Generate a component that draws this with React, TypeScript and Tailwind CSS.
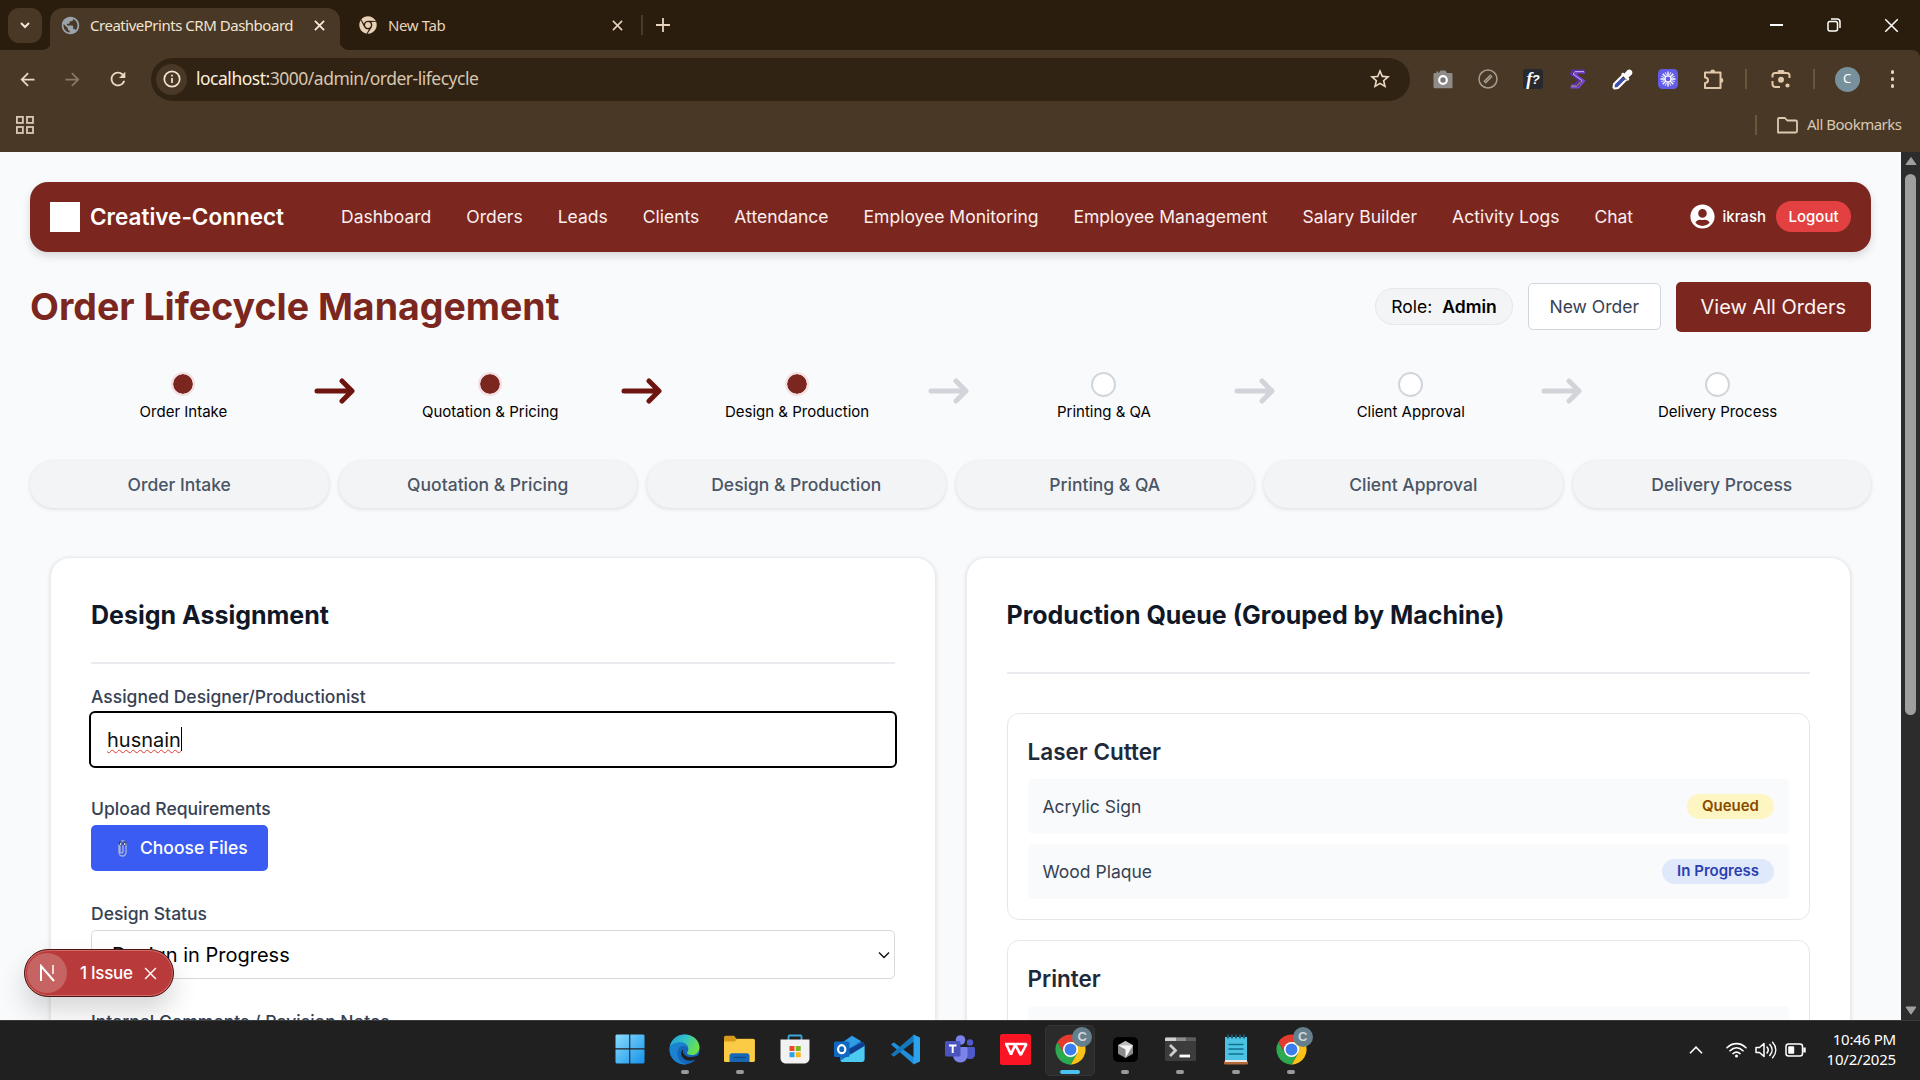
import React from "react";
import { MdArrowBack, MdArrowForward, MdRefresh, MdStarBorder, MdPublic } from "react-icons/md";
import { FaChrome, FaUserCircle } from "react-icons/fa";

const SEGOE = "font-['Noto_Sans','Open_Sans',sans-serif]";

function Cross({ size, className, width = 1.6 }: { size: number; className?: string; width?: number }) {
  return (
    <svg width={size} height={size} viewBox="0 0 12 12" className={className} fill="none" stroke="currentColor" strokeWidth={width}>
      <path d="M1 1l10 10M11 1L1 11" />
    </svg>
  );
}

function TabStrip() {
  return (
    <div className="flex h-[50px] w-full items-start bg-[#2a1d0d] text-[#e6d4be]">
      <div className="ml-[8px] mt-[8px] flex h-[35px] w-[34px] items-center justify-center rounded-[11px] bg-[#483825] text-[#f3e6d6]">
        <svg width="10" height="7" viewBox="0 0 10 7" fill="none" stroke="currentColor" strokeWidth="2">
          <path d="M1 1l4 4 4-4" />
        </svg>
      </div>
      <svg width="10" height="42" viewBox="0 0 10 42" className="-mr-px mt-[8px] fill-[#483825]">
        <path d="M10 31v11H0C6 42 10 37 10 31z" />
      </svg>
      <div className="-ml-[1px] mt-[8px] flex h-[42px] w-[290px] items-center rounded-t-[13px] bg-[#483825] pb-[8px] pl-[10px]">
        <MdPublic size={21} className="text-[#9ba4ac]" />
        <span className="ml-[9px] mt-[1px] w-[206px] whitespace-nowrap text-[15px] tracking-[-0.48px] text-[#f3e4d2]">CreativePrints CRM Dashboard</span>
        <Cross size={11} className="ml-[18px] text-[#f8ecdd]" width={1.9} />
      </div>
      <svg width="10" height="42" viewBox="0 0 10 42" className="-ml-px mt-[8px] fill-[#483825]">
        <path d="M0 31v11h10C4 42 0 37 0 31z" />
      </svg>
      <div className="flex h-[50px] w-[292px] items-center pl-[10px]">
        <FaChrome size={18} className="text-[#e6cfb2]" />
        <span className="ml-[11px] mt-[1px] w-[224px] text-[15px] tracking-[-0.4px]">New Tab</span>
        <Cross size={11} width={1.7} />
      </div>
      <div className="mt-[15px] h-[20px] w-[2px] bg-[#4d3b27]" />
      <svg width="14" height="14" viewBox="0 0 14 14" className="ml-[13px] mt-[18px]" stroke="currentColor" strokeWidth="1.8">
        <path d="M7 0v14M0 7h14" />
      </svg>
      <div className="ml-auto flex h-[50px] items-center pr-[21px] text-white">
        <div className="h-[1.5px] w-[13px] bg-white" />
        <svg width="14" height="14" viewBox="0 0 14 14" className="ml-[44px]" fill="none" stroke="currentColor" strokeWidth="1.5">
          <rect x="1" y="3.5" width="9.5" height="9.5" rx="2" />
          <path d="M4 1h6a3 3 0 013 3v6" />
        </svg>
        <Cross size={15} className="ml-[43px]" width={1.2} />
      </div>
    </div>
  );
}

function Cell({ children }: { children: React.ReactNode }) {
  return <div className="flex w-[45.1px] items-center justify-center">{children}</div>;
}

function Toolbar() {
  return (
    <div className="flex h-[58px] w-full items-center rounded-tr-[8px] bg-[#483825] text-[#e2cfb8]">
      <MdArrowBack size={21} className="ml-[17px] text-[#ecd9c2]" />
      <MdArrowForward size={21} className="ml-[24px] text-[#8b7860]" />
      <MdRefresh size={22} className="ml-[24px] text-[#ecd9c2]" />
      <div className="ml-[22px] flex h-[43px] w-[1259px] items-center rounded-full bg-[#302313] pl-[5px] pr-[18px]">
        <div className="flex h-[31px] w-[31px] items-center justify-center rounded-full bg-[#483825]">
          <svg width="18" height="18" viewBox="0 0 18 18" fill="none" stroke="#f3e4d2" strokeWidth="1.7">
            <circle cx="9" cy="9" r="7.7" />
            <path d="M9 8v5M9 4.8v1.8" />
          </svg>
        </div>
        <span className="-mt-px ml-[9px] text-[17.5px] tracking-[-0.49px] text-[#d8c6b0]">
          <span className="text-[#fbeddc]">localhost:</span>3000/admin/order-lifecycle
        </span>
        <MdStarBorder size={24} className="ml-auto text-[#ecd9c2]" />
      </div>
      <div className="ml-[10px] flex items-center">
        <Cell>
          <svg width="20" height="20" viewBox="0 0 20 20">
            <path d="M2 4h1.500V2.500h2V4H6l1.500-2.500h5L14 4h4.200c.8 0 1.300.5 1.300 1.300V18c0 .8-.5 1.300-1.300 1.300H1.800C1 19.300.500 18.800.500 18V5.300C.500 4.500 1 4 2 4z" fill="#8e8b88" />
            <circle cx="10" cy="11" r="3.800" fill="#777" stroke="#fff" strokeWidth="2.200" />
          </svg>
        </Cell>
        <Cell>
          <svg width="20" height="20" viewBox="0 0 20 20" fill="none">
            <circle cx="10" cy="10" r="9" stroke="#a79c90" strokeWidth="1.500" />
            <path d="M6.500 13.500l7-7" stroke="#a79c90" strokeWidth="3.400" />
            <path d="M7 13l6-6" stroke="#776a5c" strokeWidth="1" />
          </svg>
        </Cell>
        <Cell>
          <div className="flex h-[20px] w-[20px] items-center justify-center rounded-[3px] bg-[#27292f] font-['Liberation_Serif',serif] text-[18px] font-bold italic leading-none tracking-[-0.5px] text-white">
            f<span className="font-['Liberation_Sans',sans-serif] text-[13px]">?</span>
          </div>
        </Cell>
        <Cell>
          <svg width="18" height="20" viewBox="0 0 18 20" fill="none" strokeLinejoin="miter">
            <path d="M15.500 1.500H4L2 5l8.500 6.200L6 15.500H2" stroke="#5b2fb0" strokeWidth="2.200" />
            <path d="M16 3.500H7.500L6 5.500l9 6.500-5.500 6.500H1.500" stroke="#7c45d8" strokeWidth="2.200" />
            <path d="M15 2.500H6L4 5.200l9 6.500L7.500 17H2" stroke="#d3bff5" strokeWidth=".8" />
          </svg>
        </Cell>
        <Cell>
          <svg width="21" height="21" viewBox="0 0 21 21">
            <path d="M10.500 6.500l4 4-8.500 8.500-3.500.5-1-1 .500-3.500z" fill="#3c4fb0" stroke="#fff" strokeWidth="2" strokeLinejoin="round" />
            <path d="M10 8.500l2-2 3.500 3.500-1 1z" fill="#483825" />
            <path d="M9 5l2-1.500 1.500 1 3-3.500c1.500-1 3-.5 4 .5s1.300 2.500.3 4l-3.300 3 1 1.500L16 12z" fill="#fff" />
          </svg>
        </Cell>
        <Cell>
          <svg width="20" height="20" viewBox="0 0 20 20">
            <rect width="20" height="20" rx="4.500" fill="#625be8" />
            <circle cx="10" cy="10" r="3" fill="none" stroke="#fff" strokeWidth="1.200" />
            <path d="M10 2.500V7M10 13v4.500M2.500 10H7M13 10h4.500M4.700 4.700l3.200 3.200M12.100 12.100l3.200 3.200M15.300 4.700l-3.200 3.200M7.900 12.100l-3.200 3.200" stroke="#fff" strokeWidth="1.400" />
            <path d="M7.200 3.200l1.300 3.200M11.500 13.600l1.300 3.200M12.800 3.200l-1.300 3.200M8.500 13.600l-1.300 3.200M3.200 7.200l3.200 1.300M13.600 11.500l3.200 1.300M3.200 12.800l3.200-1.300M13.600 8.500l3.200-1.300" stroke="#fff" strokeWidth=".9" />
          </svg>
        </Cell>
        <Cell>
          <svg width="21" height="21" viewBox="0 0 21 21" fill="none" stroke="#e2c8a8" strokeWidth="2" strokeLinejoin="round">
            <path d="M2 3.500h15.500v15.500H2v-5c1.800 0 3-1.100 3-2.700S3.800 8.500 2 8.500z" />
            <path d="M7.300 3a2.400 2.400 0 014.800 0zM18 9a2.400 2.400 0 010 4.800z" fill="#e2c8a8" stroke="none" />
          </svg>
        </Cell>
      </div>
      <div className="ml-[9px] h-[20px] w-[2px] bg-[#6b563d]" />
      <svg width="20" height="20" viewBox="0 0 20 20" className="ml-[24px]" fill="none" stroke="#e2c8a8" strokeWidth="2">
        <path d="M1.500 8.500V6.500A2.500 2.500 0 014 4h12a2.500 2.500 0 012.500 2.500V9M1.500 12v3A3 3 0 004.500 18H9" />
        <path d="M6 3.500L7.500 1h5L14 3.500z" fill="#e2c8a8" stroke="none" />
        <circle cx="10" cy="10.800" r="3" fill="#e2c8a8" stroke="none" />
        <circle cx="16.500" cy="16.500" r="2.100" fill="#e2c8a8" stroke="none" />
      </svg>
      <div className="ml-[22px] h-[20px] w-[2px] bg-[#6b563d]" />
      <div className="ml-[20px] flex h-[25px] w-[25px] items-center justify-center rounded-full bg-[#78909c] text-[13px] text-white">C</div>
      <div className="ml-[31px] flex flex-col gap-[3.500px]">
        <div className="h-[3.500px] w-[3.500px] rounded-full bg-[#e8d5be]" />
        <div className="h-[3.500px] w-[3.500px] rounded-full bg-[#e8d5be]" />
        <div className="h-[3.500px] w-[3.500px] rounded-full bg-[#e8d5be]" />
      </div>
    </div>
  );
}

function Bookmarks() {
  return (
    <div className="flex h-[44px] w-full items-center bg-[#483825] pb-[10px] text-[#dcc9b2]">
      <svg width="18" height="18" viewBox="0 0 18 18" className="ml-[16px]" fill="none" stroke="#d8c8b6" strokeWidth="1.800">
        <rect x=".9" y=".9" width="6" height="6" />
        <rect x="11" y=".9" width="6" height="6" />
        <rect x=".9" y="11" width="6" height="6" />
        <rect x="11" y="11" width="6" height="6" />
      </svg>
      <div className="ml-auto h-[20px] w-[2px] bg-[#6b563d]" />
      <svg width="21" height="17" viewBox="0 0 21 17" className="ml-[20px]" fill="none" stroke="currentColor" strokeWidth="1.800" strokeLinejoin="round">
        <path d="M1 15.500V2.200C1 1.500 1.500 1 2.200 1H8l2.200 2.500h8.600c.7 0 1.200.5 1.200 1.200v9.600c0 .7-.5 1.200-1.200 1.200z" />
      </svg>
      <span className="-mt-px ml-[9px] mr-[18px] w-[95px] whitespace-nowrap text-[15px] tracking-[-0.5px]">All Bookmarks</span>
    </div>
  );
}

const NAV = ["Dashboard", "Orders", "Leads", "Clients", "Attendance", "Employee Monitoring", "Employee Management", "Salary Builder", "Activity Logs", "Chat"];
const STAGES = ["Order Intake", "Quotation & Pricing", "Design & Production", "Printing & QA", "Client Approval", "Delivery Process"];
const CURRENT = 2;

function Navbar() {
  return (
    <div className="flex h-[69.5px] items-center rounded-[18px] bg-[#7b2720] px-[20px] text-white shadow-[0_4px_8px_rgba(0,0,0,0.14)]">
      <div className="h-[30px] w-[30px] bg-white" />
      <span className="ml-[10px] w-[251px] whitespace-nowrap text-[22.5px] font-semibold">Creative-Connect</span>
      <nav className="flex gap-[35px] whitespace-nowrap text-[17.5px] text-[#fbeeee]">
        {NAV.map((n) => (
          <span key={n}>{n}</span>
        ))}
      </nav>
      <div className="ml-auto flex items-center">
        <FaUserCircle size={25} />
        <span className="ml-[7px] text-[15px] font-medium">ikrash</span>
        <div className="ml-[10px] flex h-[31px] w-[75px] items-center justify-center rounded-full bg-[#e34141] text-[15px] font-medium">Logout</div>
      </div>
    </div>
  );
}

function Heading() {
  return (
    <div className="mt-[30px] flex h-[50.5px] items-center">
      <h1 className="whitespace-nowrap text-[37.5px] font-bold text-[#7b2720]">Order Lifecycle Management</h1>
      <div className="ml-auto flex h-[37px] w-[138px] items-center justify-center gap-[10px] rounded-full border border-[#e5e7eb] bg-[#f3f4f6] text-[17.500px] text-black">
        Role: <b className="font-semibold">Admin</b>
      </div>
      <div className="ml-[15px] flex h-[47px] w-[132.5px] items-center justify-center rounded-[5px] border border-[#d1d5dc] bg-white text-[17.500px] text-[#364153]">New Order</div>
      <div className="ml-[15px] flex h-[50px] w-[195.5px] items-center justify-center rounded-[5px] bg-[#7b2720] text-[20px] text-[#fdf3f3]">View All Orders</div>
    </div>
  );
}

function Steps() {
  return (
    <div className="mt-[39.5px] grid h-[50px] grid-cols-6">
      {STAGES.map((s, i) => (
        <div key={s} className="flex justify-between">
          <div className="w-[41px]" />
          <div className="flex flex-col items-center">
            {i <= CURRENT ? (
              <div className="h-[24px] w-[24px] rounded-full border-2 border-[#f3dfe2] bg-[#7b2720] bg-clip-padding" />
            ) : (
              <div className="h-[25px] w-[25px] rounded-full border-2 border-[#d1d5dc] bg-white" />
            )}
            <span className="mt-auto whitespace-nowrap text-[15px] leading-[20px] text-black">{s}</span>
          </div>
          <div className="w-[41px] translate-x-[18px] pt-[6.5px]">
            {i < STAGES.length - 1 && (
              <svg width="41" height="26" viewBox="0 0 41 26" fill="none" stroke={i < CURRENT ? "#6f1510" : "#d1d5d9"} strokeWidth="5" strokeLinecap="round" strokeLinejoin="round">
                <path d="M3 13h34M28 3l10 10-10 10" />
              </svg>
            )}
          </div>
        </div>
      ))}
    </div>
  );
}

function Tabs() {
  return (
    <div className="mt-[39.5px] grid h-[46.5px] grid-cols-6 gap-[10px]">
      {STAGES.map((s) => (
        <div key={s} className="flex items-center justify-center rounded-full bg-[#f3f4f6] pt-px text-[17.500px] font-medium text-[#4a5565] shadow-[0_1px_4px_rgba(0,0,0,0.13)]">
          {s}
        </div>
      ))}
    </div>
  );
}

function Label({ children, className = "" }: { children: React.ReactNode; className?: string }) {
  return <div className={`text-[17.500px] font-medium leading-[25px] text-[#364153] ${className}`}>{children}</div>;
}

function DesignCard() {
  return (
    <section className="h-[560px] w-[885.5px] rounded-[20px] border border-[#e9ebee] bg-white px-[40px] pt-[40px] shadow-[0_1px_4px_rgba(0,0,0,0.12)]">
      <h2 className="text-[25px] font-bold leading-[35px] text-[#101828]">Design Assignment</h2>
      <div className="mt-[29.5px] h-[1.5px] bg-[#e9ebee]" />
      <Label className="mt-[20px]">Assigned Designer/Productionist</Label>
      <div className="-mx-[2px] mt-[2px] flex h-[57px] items-center rounded-[6px] border-[2.5px] border-black bg-white pl-[16px] text-[20px] text-[#101010]">
        <span className="mt-[2px] whitespace-nowrap leading-[26px] decoration-[#e2372f] underline decoration-wavy decoration-[1.2px] underline-offset-[2px] [text-decoration-skip-ink:none]">husnain</span>
        <span className="h-[24px] w-[1.5px] bg-black" />
      </div>
      <Label className="mt-[28px]">Upload Requirements</Label>
      <div className="mt-[4px] flex h-[46px] w-[176.5px] items-center rounded-[5px] bg-[#3a5cf3] pl-[26px] pt-px text-[17.500px] font-medium text-white">
        <svg width="12" height="19" viewBox="0 0 12 19" fill="none">
          <path d="M2 5.500v8a3.500 3.500 0 007 0V5a3 3 0 00-6 0v7.500a1.500 1.500 0 003 0V6" stroke="#aab4d8" strokeWidth="1.300" />
          <path d="M1.500 3.500l3-1M6.500 2.500l3 1" stroke="#222b4a" strokeWidth="1" />
          <circle cx="3.700" cy="5" r="1.300" fill="#fff" stroke="#26304f" strokeWidth=".8" />
          <circle cx="7.700" cy="5" r="1.300" fill="#fff" stroke="#26304f" strokeWidth=".8" />
        </svg>
        <span className="ml-[11px]">Choose Files</span>
      </div>
      <Label className="mt-[30px]">Design Status</Label>
      <div className="mt-[4px] flex h-[49px] items-center justify-between rounded-[5px] border border-[#d6d9de] bg-white pl-[20px] pr-[4px] pt-px text-[20px] text-black">
        Design in Progress
        <svg width="12" height="8" viewBox="0 0 12 8" fill="none" stroke="#111" strokeWidth="1.400">
          <path d="M1 1.500l5 5 5-5" />
        </svg>
      </div>
      <Label className="mt-[30px]">Internal Comments / Revision Notes</Label>
    </section>
  );
}

function QueueRow({ children }: { children?: React.ReactNode }) {
  return <div className="flex h-[55px] items-center justify-between rounded-[5px] bg-[#f9fafb] px-[15px]">{children}</div>;
}

function QueueItem({ name, status, tone }: { name: string; status: string; tone: string }) {
  return (
    <QueueRow>
      <span className="pt-px text-[17.500px] text-[#364153]">{name}</span>
      <span className={`flex h-[25px] items-center rounded-full px-[15px] text-[15px] font-semibold ${tone}`}>{status}</span>
    </QueueRow>
  );
}

function QueueCard() {
  return (
    <section className="h-[560px] w-[885.5px] rounded-[20px] border border-[#e9ebee] bg-white px-[40px] pt-[40px] shadow-[0_1px_4px_rgba(0,0,0,0.12)]">
      <h2 className="text-[25px] font-bold leading-[35px] text-[#101828]">Production Queue (Grouped by Machine)</h2>
      <div className="mt-[39.5px] h-[1.5px] bg-[#e9ebee]" />
      <div className="mt-[39.5px] h-[207px] rounded-[12px] border border-[#e5e7eb] px-[20px] pt-[20px]">
        <h3 className="text-[22.5px] font-semibold leading-[35px] text-[#1e2939]">Laser Cutter</h3>
        <div className="mt-[10px] flex flex-col gap-[10px]">
          <QueueItem name="Acrylic Sign" status="Queued" tone="bg-[#fdf6c2] text-[#894b00]" />
          <QueueItem name="Wood Plaque" status="In Progress" tone="bg-[#dfe9fb] text-[#2b3fb0]" />
        </div>
      </div>
      <div className="mt-[20px] h-[207px] rounded-[12px] border border-[#e5e7eb] px-[20px] pt-[20px]">
        <h3 className="text-[22.5px] font-semibold leading-[35px] text-[#1e2939]">Printer</h3>
        <div className="mt-[10px]">
          <QueueRow />
        </div>
      </div>
    </section>
  );
}

function IssueBadge() {
  return (
    <div className="absolute left-[24px] top-[797px] flex h-[48px] w-[150px] items-center rounded-full border-[1.5px] border-[#4a1512] bg-[#b93a3a] pl-[2px] text-white shadow-[inset_0_0_0_1px_#d26b68,0_14px_26px_rgba(0,0,0,0.16)]">
      <div className="flex h-[40px] w-[40px] items-center justify-center rounded-full bg-[#c66463]">
        <svg width="17" height="18" viewBox="0 0 17 18" fill="none" strokeWidth="2">
          <path d="M2 17V2l13 15" stroke="#fff" />
          <path d="M14 1v9" stroke="#f3d6d6" />
        </svg>
      </div>
      <span className="ml-[13px] mt-px w-[54px] whitespace-nowrap text-[17px] font-medium tracking-[-0.3px]">1 Issue</span>
      <Cross size={13} className="ml-[10px]" width={1.3} />
    </div>
  );
}

function Page() {
  return (
    <div className="flex h-[868px] w-full overflow-hidden">
      <main className="relative h-[868px] w-[1901px] overflow-hidden bg-[#f9fafc] px-[30px] pt-[30px] font-['Inter',sans-serif]">
        <Navbar />
        <Heading />
        <Steps />
        <Tabs />
        <div className="mt-[49px] flex justify-between px-[20px]">
          <DesignCard />
          <QueueCard />
        </div>
        <IssueBadge />
      </main>
      <div className="flex w-[19px] flex-col items-center bg-[#2c2c2c]">
        <svg width="12" height="8" viewBox="0 0 12 8" className="mt-[5px] fill-[#9f9f9f]">
          <path d="M6 .5L11 7.500H1z" stroke="#9f9f9f" strokeLinejoin="round" />
        </svg>
        <div className="mt-[9px] h-[541px] w-[11px] rounded-full bg-[#9f9f9f]" />
        <svg width="12" height="9" viewBox="0 0 12 9" className="mb-[5px] mt-auto fill-[#9f9f9f]">
          <path d="M6 8.200L11 1H1z" stroke="#9f9f9f" strokeLinejoin="round" />
        </svg>
      </div>
    </div>
  );
}

function ChromeLogo() {
  return (
    <div className="relative h-[32px] w-[32px]">
      <svg width="33" height="33" viewBox="0 0 48 48">
        <path d="M4.950 13A22 22 0 0143.050 13H24L14.500 29.500z" fill="#e33b2e" />
        <path d="M43.050 13A22 22 0 0124 46l9.500-16.500L24 13z" fill="#fbc116" />
        <path d="M24 46A22 22 0 014.950 13l9.550 16.500h19z" fill="#2da94f" />
        <circle cx="24" cy="24" r="11" fill="#fff" />
        <circle cx="24" cy="24" r="8.600" fill="#3b7ded" />
      </svg>
      <div className="absolute -right-[6px] -top-[6px] flex h-[20px] w-[20px] items-center justify-center rounded-full bg-[#657f8c] font-['Liberation_Sans',sans-serif] text-[13px] font-bold text-[#cfd8dc]">C</div>
    </div>
  );
}

const APPS: { icon: React.ReactNode; open?: boolean; active?: boolean }[] = [
  {
    icon: (
      <svg width="30" height="30" viewBox="0 0 30 30">
        <defs>
          <linearGradient id="win" x1="0" y1="0" x2="1" y2="1">
            <stop offset="0" stopColor="#8adcfd" />
            <stop offset="1" stopColor="#1592ea" />
          </linearGradient>
        </defs>
        <path d="M1.500.500h12.700v13.800H.500V1.500zM15.300.500h13.200l1 1v12.800H15.300zM.500 15.400h13.700v14H1.500l-1-1zM15.300 15.400h14.200v13l-1 1H15.300z" fill="url(#win)" />
      </svg>
    ),
  },
  {
    open: true,
    icon: (
      <svg width="31" height="31" viewBox="0 0 31 31">
        <defs>
          <linearGradient id="edgeTop" x1="0" y1="0" x2="1" y2=".4">
            <stop offset="0" stopColor="#2398d8" />
            <stop offset=".5" stopColor="#2fc2c8" />
            <stop offset="1" stopColor="#6be04f" />
          </linearGradient>
        </defs>
        <circle cx="15.500" cy="15.500" r="15" fill="#1566b8" />
        <path d="M.600 14C1.500 6 7.500.500 15.500.500c8.500 0 15 6 15 12.700 0 5-3.500 7.800-7.500 7.800-3 0-5-1-5-2 0-.8 1.300-1.500 1.300-4C19.300 11 16 8.500 11.500 8.500 6 8.500 2 11 .600 14z" fill="url(#edgeTop)" />
        <path d="M11 13c-2 2-3 4.500-2.500 8 .800 5 4.500 8.500 9.500 9.300C10 31.500.500 25.500.500 15.500.500 11 5.500 8.500 11.500 8.500c4.500 0 7.800 2.500 7.800 6.500-.5-3-5-4.500-8.300-2z" fill="#1b82cf" />
        <path d="M30.500 20.500c-3 2.500-9.500 3.300-13 1.700-3-1.400-4.200-4.500-3.200-7.200-2 1.500-2.800 4.500-1.300 7.500 2.500 4.500 9.500 5.500 14.500 2.500z" fill="#202020" />
      </svg>
    ),
  },
  {
    open: true,
    icon: (
      <svg width="31" height="28" viewBox="0 0 31 28">
        <path d="M0 2.500C0 1.500.700.700 1.700.700H10l2.500 3H29c1 0 1.800.8 1.800 1.800V25c0 1-.8 1.800-1.800 1.800H1.700C.700 26.800 0 26 0 25z" fill="#d99a1c" />
        <path d="M0 6.500h11L13 4h16c1 0 1.800.7 1.800 1.700V25.500c0 .9-.8 1.500-1.800 1.500H1.700C.700 27 0 26.400 0 25.500z" fill="#fccb45" />
        <path d="M5.500 27v-6c0-1.700 1-2.700 2.700-2.700h14.600c1.700 0 2.700 1 2.700 2.700v6z" fill="#1668b5" />
        <path d="M9.500 22.500h12" stroke="#0d4b8e" strokeWidth="1.500" />
      </svg>
    ),
  },
  {
    icon: (
      <svg width="30" height="30" viewBox="0 0 30 30">
        <path d="M8.500 6V2.500c0-.7.300-1 1-1h11c.7 0 1 .3 1 1V6" fill="none" stroke="#3aa6dc" strokeWidth="1.800" />
        <path d="M.500 5.500h29V24c0 3-2 5.500-5.500 5.500H6C2.500 29.500.500 27 .500 24z" fill="#f2f2f2" />
        <path d="M9.500 12h5v5h-5z" fill="#ea4b26" />
        <path d="M15.700 12h5v5h-5z" fill="#78b81a" />
        <path d="M9.500 18.200h5v5h-5z" fill="#28a1e6" />
        <path d="M15.700 18.200h5v5h-5z" fill="#fbb714" />
      </svg>
    ),
  },
  {
    icon: (
      <svg width="31" height="28" viewBox="0 0 31 28">
        <path d="M6 9L18 .500 30.500 9v15c0 2-1 3-3 3H9c-2 0-3-1-3-3z" fill="#1670c4" />
        <path d="M8 8L18 1l9 5-14 9z" fill="#2f9de6" />
        <path d="M13 15L30 6.500V13L18 20z" fill="#103f91" />
        <path d="M30.500 11v13c0 2-1 3-3 3H9c-1 0-2-.5-2.500-1.500z" fill="#4ccaf0" />
        <rect y="6.500" width="15.500" height="15.500" rx="1.500" fill="#1168c0" />
        <ellipse cx="7.700" cy="14.200" rx="3.600" ry="4" fill="none" stroke="#fff" strokeWidth="2.200" />
      </svg>
    ),
  },
  {
    icon: (
      <svg width="31" height="31" viewBox="0 0 31 31">
        <path d="M1 10.500l2.800-2.300L24 23.500v7z" fill="#1e8fd8" />
        <path d="M1 20.500l2.800 2.300L24 7.500v-7z" fill="#1478bd" />
        <path d="M23.500.500l6.500 3V27.500l-6.500 3z" fill="#2ba2ee" />
      </svg>
    ),
  },
  {
    icon: (
      <svg width="32" height="30" viewBox="0 0 32 30">
        <circle cx="26" cy="8.500" r="3.200" fill="#5059c9" />
        <path d="M20 13h9.500c.8 0 1.500.7 1.500 1.500V20c0 3-2 5-5 5s-6-2-6-5z" fill="#5059c9" />
        <circle cx="16.500" cy="6" r="4.800" fill="#7b83eb" />
        <path d="M9 13h13c.8 0 1.500.7 1.500 1.500V21c0 4.500-3 7.500-7.200 7.500S9 25.500 9 21z" fill="#7b83eb" />
        <rect x="1" y="7" width="15.500" height="15.500" rx="1.500" fill="#4b53bc" />
        <path d="M5 11.500h7.500M8.700 11.500V19" stroke="#fff" strokeWidth="2" />
      </svg>
    ),
  },
  {
    icon: (
      <svg width="31" height="31" viewBox="0 0 31 31" fill="none">
        <rect width="31" height="31" rx="2.500" fill="#fb1524" />
        <path d="M5 10h10.500L11 20.500 6.200 10M16 10h10.500L20.800 21 15 10.500" stroke="#fff" strokeWidth="2.600" strokeLinejoin="bevel" />
      </svg>
    ),
  },
  { open: true, active: true, icon: <ChromeLogo /> },
  {
    open: true,
    icon: (
      <svg width="25" height="25" viewBox="0 0 25 25">
        <rect width="25" height="25" rx="5" fill="#000" />
        <path d="M12.500 4l7.500 4.300v8.500l-7.500 4.300L5 16.800V8.300z" fill="#8b8b8b" />
        <path d="M5 8.300L12.500 4 20 8.300z" fill="#bdbdbd" />
        <path d="M5 8.300h15l-7.500 12.800v-8.500z" fill="#f4f4f4" />
      </svg>
    ),
  },
  {
    open: true,
    icon: (
      <svg width="31" height="24" viewBox="0 0 31 24" fill="none">
        <rect width="31" height="24" rx="1.500" fill="#3c3c3c" />
        <path d="M0 4V1.500C0 .700.700.500 1.500.500H11V4z" fill="#d0d0d0" />
        <path d="M11 .500h10V4H11z" fill="#8c8c8c" />
        <path d="M21 .500h8.500c.8 0 1.500.4 1.500 1V4H21z" fill="#5d5d5d" />
        <path d="M5 8l5.500 5.500L5 19" stroke="#cfcfcf" strokeWidth="2.800" />
        <path d="M14.500 19H25" stroke="#fff" strokeWidth="2.800" />
      </svg>
    ),
  },
  {
    open: true,
    icon: (
      <svg width="24" height="31" viewBox="0 0 24 31">
        <path d="M1 3h22v25H1z" fill="#4cc3e3" />
        <path d="M0 27.500h24V29c0 1-.5 1.500-1.500 1.500h-21C.500 30.500 0 30 0 29z" fill="#b5683a" />
        <path d="M1 26h22v2H1z" fill="#e8e8e8" />
        <path d="M4.500 10.500h15M4.500 15h15M4.500 20h15" stroke="#14708f" strokeWidth="1.400" />
        <path d="M4 .500v4M8 .500v4M12 .500v4M16 .500v4M20 .500v4" stroke="#1a5f7a" strokeWidth="1.800" />
      </svg>
    ),
  },
  { open: true, icon: <ChromeLogo /> },
];

function Taskbar() {
  return (
    <div className={`flex h-[60px] w-full items-center border-t border-[#3a3a3a] bg-[#202020] text-white ${SEGOE}`}>
      <div className="ml-[602px] flex h-full">
        {APPS.map((a, i) => (
          <div key={i} className="flex h-full w-[55.1px] flex-col items-center pt-[3.5px]">
            <div className={a.active ? "flex h-[51px] w-[50px] flex-col items-center justify-end rounded-[5px] border border-[#353535] bg-[#2b2b2b]" : "flex h-[51px] w-[50px] flex-col items-center justify-end border border-transparent"}>
              <div className="flex h-[31px] items-center">{a.icon}</div>
              <div className={a.active ? "mb-px mt-[5px] h-[4px] w-[20px] rounded-full bg-[#4cc2f1]" : a.open ? "mb-px mt-[5px] h-[4px] w-[8px] rounded-full bg-[#9a9a9a]" : "mb-px mt-[5px] h-[4px]"} />
            </div>
          </div>
        ))}
      </div>
      <div className="ml-auto flex items-center pb-[2px] pr-[24px]">
        <svg width="14" height="8" viewBox="0 0 14 8" fill="none" stroke="#fff" strokeWidth="1.600">
          <path d="M1 7.200l6-6 6 6" />
        </svg>
        <svg width="21" height="16" viewBox="0 0 21 16" className="ml-[23px]" fill="none" stroke="#fff" strokeWidth="1.600" strokeLinecap="round">
          <path d="M1 5.800c5.500-5.600 13.500-5.600 19 0M4 8.800c4-4 9-4 13 0M7 11.600c2.300-2 4.700-2 7 0" />
          <circle cx="10.500" cy="14" r="1.500" fill="#fff" stroke="none" />
        </svg>
        <svg width="22" height="18" viewBox="0 0 22 18" className="ml-[8px]" fill="none" stroke="#fff" strokeWidth="1.500" strokeLinecap="round" strokeLinejoin="round">
          <path d="M1 6.500v5h3.500L9 15.500v-13L4.500 6.500zM12 6c1.500 1.800 1.500 4.200 0 6M14.800 3.500c3 3.300 3 7.700 0 11M17.600 1.200c4.200 4.800 4.200 10.800 0 15.600" />
        </svg>
        <svg width="22" height="14" viewBox="0 0 22 14" className="ml-[8px]" fill="none" stroke="#fff" strokeWidth="1.500">
          <rect x="1" y="1" width="16.500" height="12" rx="2.500" />
          <rect x="3.200" y="3.200" width="6" height="7.600" rx=".8" fill="#fff" stroke="none" />
          <path d="M19.500 4.500v5" strokeWidth="2.400" />
        </svg>
        <div className="-mt-[2px] ml-[18px] w-[71px] whitespace-nowrap text-right text-[15px] leading-[20px] tracking-[-0.2px]">
          <div>10:46 PM</div>
          <div>10/2/2025</div>
        </div>
      </div>
    </div>
  );
}

export default function App() {
  return (
    <div className="h-[1080px] w-[1920px] overflow-hidden bg-[#2a1d0d]">
      <div className={SEGOE}>
        <TabStrip />
        <Toolbar />
        <Bookmarks />
      </div>
      <Page />
      <Taskbar />
    </div>
  );
}
